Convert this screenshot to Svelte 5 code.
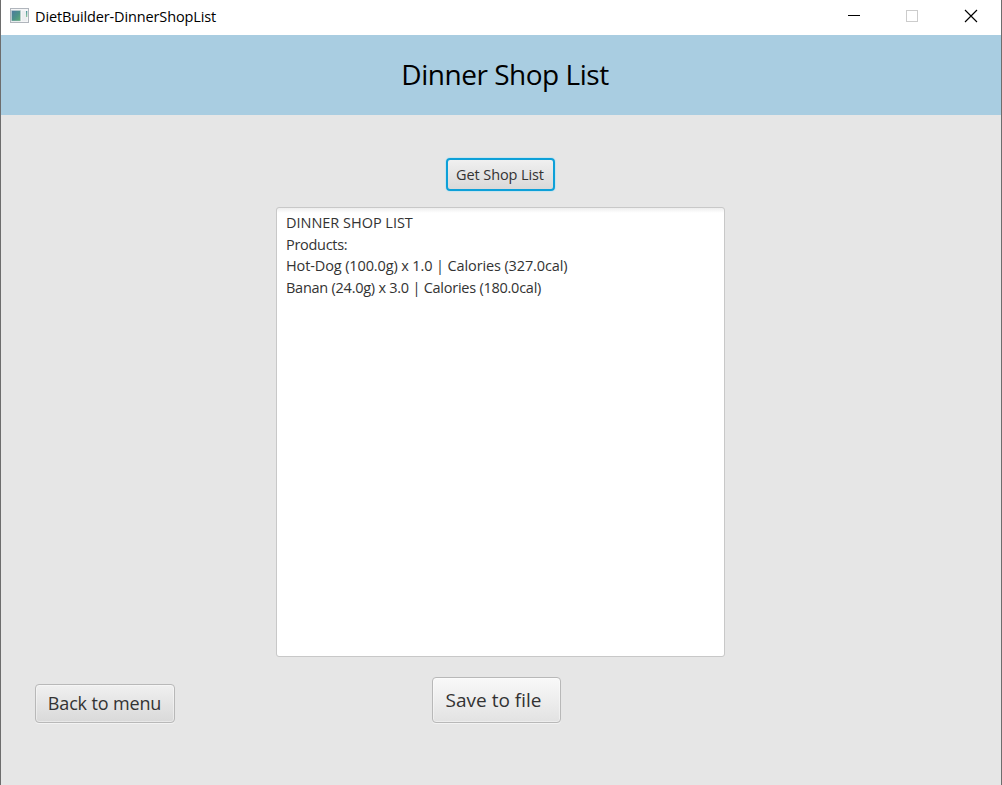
<script>
  const lines = [
    { text: 'DINNER SHOP LIST', spacing: -0.02 },
    { text: 'Products:', spacing: -0.3 },
    { text: 'Hot-Dog (100.0g) x 1.0 | Calories (327.0cal)', spacing: -0.12 },
    { text: 'Banan (24.0g) x 3.0 | Calories (180.0cal)', spacing: -0.25 }
  ];
</script>

<main class="window">
  <header class="titlebar">
    <svg class="app-icon" width="20" height="16" viewBox="0 0 20 16">
      <defs>
        <linearGradient id="pane" x1="0" y1="0" x2="1" y2="1">
          <stop offset="0" stop-color="#4c78a0" />
          <stop offset="0.55" stop-color="#4c9287" />
          <stop offset="1" stop-color="#62ad76" />
        </linearGradient>
        <linearGradient id="strip" x1="0" y1="0" x2="0" y2="1">
          <stop offset="0" stop-color="#4f94a0" />
          <stop offset="1" stop-color="#8fc99b" />
        </linearGradient>
      </defs>
      <rect x="0.5" y="0.5" width="18" height="14" fill="#f5f6f7" stroke="#b0b5bc" />
      <rect x="1.5" y="2.5" width="9" height="10.5" fill="url(#pane)" stroke="#c3d2d4" stroke-width="0.5" />
      <rect x="12" y="3" width="5" height="10" fill="#eceef0" />
      <rect x="16" y="3" width="1.3" height="6" fill="url(#strip)" />
    </svg>
    <span class="name">DietBuilder-DinnerShopList</span>
    <svg class="controls" width="172" height="35" viewBox="0 0 172 35" fill="none">
      <path d="M18 15.5H30" stroke="#000" />
      <rect x="76.5" y="10.5" width="11" height="11" stroke="#ccc" />
      <path d="M135 10L147 22M147 10L135 22" stroke="#000" stroke-width="1.15" />
    </svg>
  </header>
  <h1><span>Dinner Shop List</span></h1>
  <section class="content">
    <button class="get"><span>Get Shop List</span></button>
    <div class="list">
      {#each lines as line}
        <div><span style="letter-spacing: {line.spacing}px">{line.text}</span></div>
      {/each}
    </div>
    <div class="actions">
      <button class="back"><span>Back to menu</span></button>
      <button class="save"><span>Save to file</span></button>
    </div>
  </section>
</main>

<style>
  :global(body) { margin: 0; overflow: hidden; }
  .window {
    box-sizing: border-box;
    width: 1002px;
    height: 785px;
    border: solid #6d6d6d;
    border-width: 0 1px;
    background: #e6e6e6;
    font-family: "Open Sans", "Noto Sans", sans-serif;
    color: #333;
    display: flex;
    flex-direction: column;
  }
  span { white-space: pre; }
  .titlebar {
    height: 35px;
    background: #fff;
    display: flex;
    align-items: flex-start;
    padding-left: 9px;
    color: #000;
  }
  .app-icon { margin-top: 8px; flex: none; }
  .name {
    margin-left: 5px;
    font-size: 14.5px;
    line-height: 33px;
    letter-spacing: -0.13px;
  }
  .controls { margin-left: auto; flex: none; margin-right: -1px; }
  h1 {
    margin: 0;
    height: 80px;
    background: #a9cde1;
    color: #000;
    font-size: 28px;
    font-weight: 400;
    line-height: 79px;
    text-align: center;
    letter-spacing: -0.48px;
    padding-left: 8px;
  }
  .content {
    display: flex;
    flex-direction: column;
    align-items: center;
    padding-top: 43px;
  }
  button {
    box-sizing: border-box;
    padding: 0;
    font: inherit;
    color: #333;
    border: 1px solid #b8b8b8;
    border-radius: 4px;
    background: linear-gradient(#f0f0f0, #d9d9d9);
    box-shadow: inset 0 0 0 1px rgba(255, 255, 255, 0.4), 0 1px 0 #f3f3f3;
  }
  .get {
    width: 109px;
    height: 33px;
    border: 2px solid #0da0d8;
    box-shadow: 0 0 1px 1px #c6e3ee;
    font-size: 14.5px;
    line-height: 29px;
    letter-spacing: -0.1px;
    margin-right: 2px;
  }
  .list {
    box-sizing: border-box;
    width: 449px;
    height: 450px;
    margin: 16px 1px 0 0;
    padding: 4.3px 9px;
    background: linear-gradient(#eee, #fff 5px);
    border: 1px solid #c8c8c8;
    border-radius: 3px;
    font-size: 14.5px;
    line-height: 21.4px;
  }
  .actions {
    align-self: stretch;
    display: flex;
    align-items: flex-start;
    padding: 20px 0 0 34px;
  }
  .back {
    width: 140px;
    height: 39px;
    margin-top: 7px;
    font-size: 18px;
    line-height: 35px;
    letter-spacing: -0.15px;
    padding-right: 1px;
  }
  .save {
    width: 129px;
    height: 46px;
    margin-left: 257px;
    font-size: 19px;
    line-height: 42px;
    padding-right: 6px;
    background: linear-gradient(#f9f9f9, #e2e2e2);
  }
</style>
